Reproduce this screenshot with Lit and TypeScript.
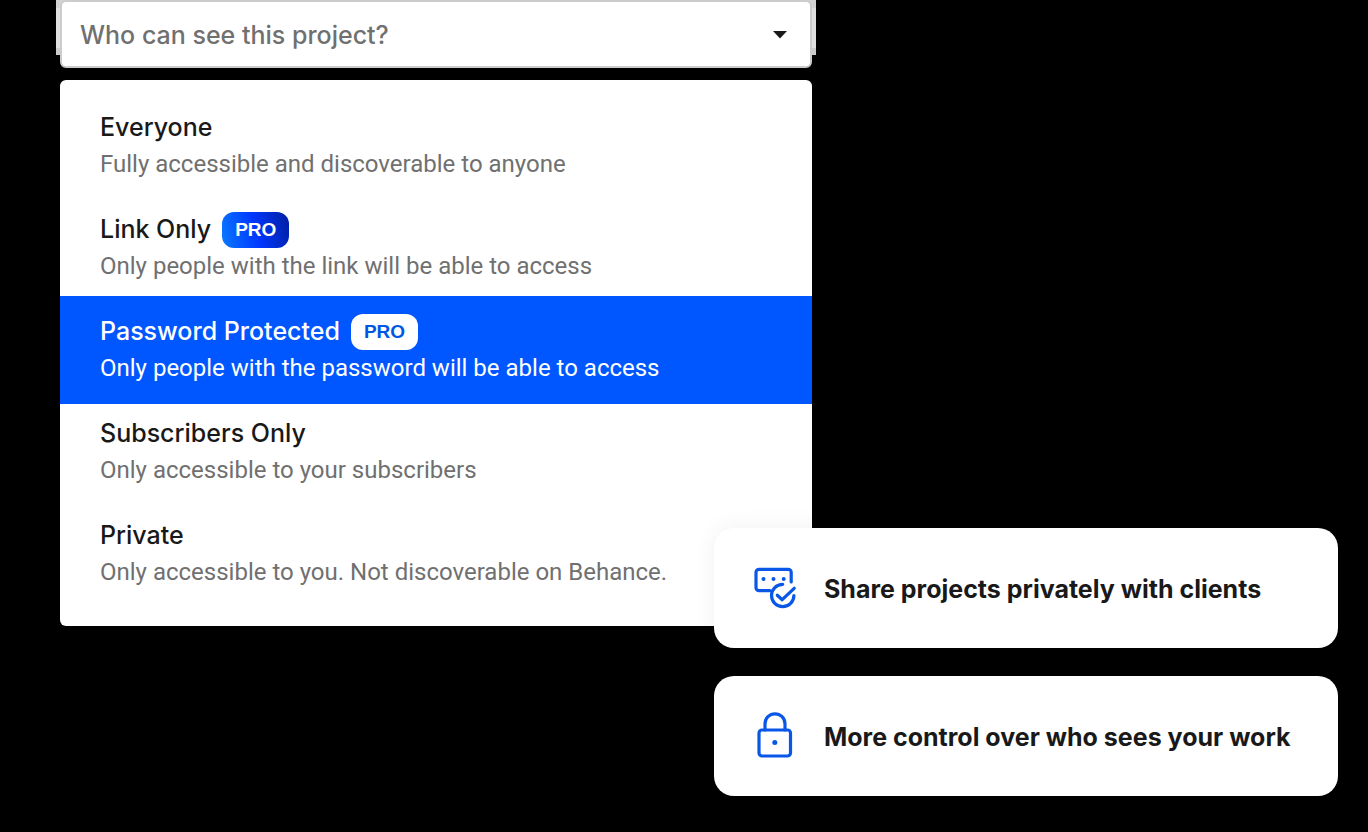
import { LitElement, html, svg, css, nothing } from "lit";
import { customElement, state, property } from "lit/decorators.js";
import { classMap } from "lit/directives/class-map.js";

interface Option {
  id: string;
  title: string;
  description: string;
  pro?: boolean;
}

const OPTIONS: Option[] = [
  { id: "everyone", title: "Everyone", description: "Fully accessible and discoverable to anyone" },
  { id: "link", title: "Link Only", description: "Only people with the link will be able to access", pro: true },
  { id: "password", title: "Password Protected", description: "Only people with the password will be able to access", pro: true },
  { id: "subscribers", title: "Subscribers Only", description: "Only accessible to your subscribers" },
  { id: "private", title: "Private", description: "Only accessible to you. Not discoverable on Behance." },
];

const passwordIcon = svg`
  <path d="M16 24.700H5a3 3 0 0 1-3-3V6.300a3 3 0 0 1 3-3h29.200a3 3 0 0 1 3 3V16" />
  <path d="M28.700 18.300a11.200 11.200 0 1 0 11.200 11.200" />
  <path d="M23.300 29.200 28.200 33.700 40.200 22.300" />
  <g class="dot"><circle cx="9.500" cy="13" r="2" /><circle cx="19.500" cy="13" r="2" /><circle cx="29.700" cy="13" r="2" /></g>`;

const lockIcon = svg`
  <rect x="5" y="16" width="31.500" height="26" rx="3" />
  <path d="M11 16V9.800a10 10 0 0 1 20 0V16" />
  <g class="dot"><circle cx="20.800" cy="28.500" r="2.500" /></g>`;

@customElement("feature-card")
export class FeatureCard extends LitElement {
  @property() icon = "lock";
  @property() text = "";

  static styles = css`
    :host {
      display: flex;
      align-items: center;
      gap: 26px;
      padding: 38px 40px 34px;
      border-radius: 20px;
      background: #fff;
      box-shadow: 0 0 24px rgba(0, 0, 0, 0.06);
    }
    .icon {
      flex: none;
      width: 44px;
      height: 48px;
      overflow: visible;
      fill: none;
      stroke: #0957e6;
      stroke-width: 3.2;
      stroke-linecap: round;
      stroke-linejoin: round;
    }
    .dot {
      fill: #0957e6;
      stroke: none;
    }
    .text {
      margin: 0;
      padding-bottom: 2px;
      font-size: 25px;
      line-height: 36px;
      font-weight: 650;
      color: #191919;
    }
  `;

  render() {
    return html`
      <svg class="icon" viewBox="0 0 44 48" aria-hidden="true">
        ${this.icon === "lock" ? lockIcon : passwordIcon}
      </svg>
      <p class="text">${this.text}</p>
    `;
  }
}

@customElement("app-root")
export class AppRoot extends LitElement {
  @state() private active = "password";

  static styles = css`
    :host {
      display: block;
      box-sizing: border-box;
      min-height: 100vh;
      padding: 0 30px 36px 56px;
      background: #000;
      font-family: Inter, "Liberation Sans", sans-serif;
    }
    .page {
      display: flex;
      flex-direction: column;
    }
    .picker {
      width: 100%;
      max-width: 760px;
      box-sizing: border-box;
      padding: 0 4px;
      background: linear-gradient(#d3d3d3 8px, #dfe0e2 8px 48px, #ccc 48px) no-repeat 0 0 / 100% 55px;
    }
    .field {
      display: grid;
      align-items: center;
    }
    .select,
    .caret {
      grid-area: 1 / 1;
    }
    .select {
      appearance: none;
      width: 100%;
      height: 68px;
      margin: 0;
      padding: 2px 60px 0 18px;
      border: 2px solid #ccc;
      border-radius: 6px;
      background: #fff;
      color: #707070;
      font: 550 25px/36px Inter, "Liberation Sans", sans-serif;
    }
    .caret {
      justify-self: end;
      width: 14px;
      height: 10px;
      margin-right: 25px;
      fill: #191919;
      pointer-events: none;
    }
    .menu {
      list-style: none;
      margin: 12px 0 0;
      padding: 12px 0 18px;
      border-radius: 6px;
      background: #fff;
    }
    .item + .item {
      margin-top: -6px;
    }
    .option {
      display: block;
      width: 100%;
      margin: 0;
      padding: 18px 40px;
      border: 0;
      background: none;
      text-align: left;
      font-family: inherit;
      line-height: 36px;
      color: #191919;
    }
    .heading {
      display: flex;
      align-items: center;
      gap: 11px;
      height: 36px;
      font-size: 25px;
      line-height: 34px;
      font-weight: 550;
    }
    .name {
      padding-bottom: 2px;
    }
    .description {
      display: block;
      font-family: Roboto, "Liberation Sans", sans-serif;
      font-size: 24px;
      font-weight: 400;
      color: #707070;
    }
    .badge {
      padding: 0 13px;
      border-radius: 12px;
      background: linear-gradient(75deg, #0a7cff, #0038ff 50%, #001ea0);
      color: #fff;
      font-family: "Liberation Sans", Arial, sans-serif;
      font-size: 19px;
      line-height: 36px;
      font-weight: 700;
    }
    .active {
      position: relative;
      background: #0057ff;
      color: #fff;
    }
    .active .description {
      color: #fff;
    }
    .active .badge {
      background: #fff;
      color: #0057e6;
    }
    .cards {
      position: relative;
      display: grid;
      gap: 28px;
      align-self: flex-end;
      width: 100%;
      max-width: 624px;
      margin-top: -98px;
    }
  `;

  private onSelect(e: Event) {
    this.active = (e.target as HTMLSelectElement).value;
  }

  render() {
    return html`
      <main class="page">
        <section class="picker">
          <div class="field">
            <select class="select" aria-label="Who can see this project?" @change=${this.onSelect}>
              <option value="" selected disabled>Who can see this project?</option>
              ${OPTIONS.map((o) => html`<option value=${o.id}>${o.title}</option>`)}
            </select>
            <svg class="caret" viewBox="0 -2 14 10" aria-hidden="true"><path d="M0 0h14L7 7.500z" /></svg>
          </div>
          <ul class="menu">
            ${OPTIONS.map(
              (o) => html`
                <li class="item">
                  <button
                    type="button"
                    class=${classMap({ option: true, active: o.id === this.active })}
                    aria-pressed=${o.id === this.active}
                    @click=${() => (this.active = o.id)}
                  >
                    <span class="heading"><span class="name">${o.title}</span>${o.pro ? html`<span class="badge">PRO</span>` : nothing}</span>
                    <span class="description">${o.description}</span>
                  </button>
                </li>
              `
            )}
          </ul>
        </section>
        <section class="cards">
          <feature-card icon="password" text="Share projects privately with clients"></feature-card>
          <feature-card icon="lock" text="More control over who sees your work"></feature-card>
        </section>
      </main>
    `;
  }
}
